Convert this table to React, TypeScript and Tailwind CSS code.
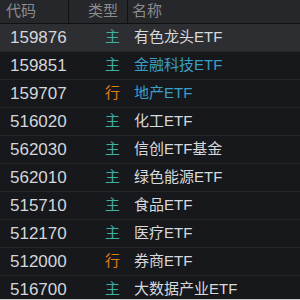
import React from 'react'

type Row = { code: string; kind: '主' | '行'; name: string; hot?: boolean }

const rows: Row[] = [
  { code: '159876', kind: '主', name: '有色龙头ETF' },
  { code: '159851', kind: '主', name: '金融科技ETF', hot: true },
  { code: '159707', kind: '行', name: '地产ETF', hot: true },
  { code: '516020', kind: '主', name: '化工ETF' },
  { code: '562030', kind: '主', name: '信创ETF基金' },
  { code: '562010', kind: '主', name: '绿色能源ETF' },
  { code: '515710', kind: '主', name: '食品ETF' },
  { code: '512170', kind: '主', name: '医疗ETF' },
  { code: '512000', kind: '行', name: '券商ETF' },
  { code: '516700', kind: '主', name: '大数据产业ETF' },
]

export default function App() {
  return (
    <div
      className="relative w-[300px] h-[300px] overflow-hidden bg-[#16181c] text-[15px]"
      style={{ fontFamily: '"Liberation Sans", "Noto Sans CJK SC", sans-serif' }}
    >
      {/* 表头 */}
      <div className="grid grid-cols-[69px_59px_1fr] h-[24px] bg-[#26272b] border-b border-[#101114] text-[#8a8b8f]">
        <div className="flex items-center pl-[6px] border-r border-[#101114]">代码</div>
        <div className="flex items-center justify-end pr-[9px] border-r border-[#101114]">类型</div>
        <div className="flex items-center pl-[4px]">名称</div>
      </div>

      {rows.map((r, i) => (
        <div
          key={r.code}
          className={
            'grid grid-cols-[69px_59px_1fr] h-[28px] border-b border-[#24262a] ' +
            (i === 0 ? 'bg-[#2d2e32] h-[27px]' : '')
          }
        >
          <div className="flex items-center pl-[10px] text-[17px] text-[#d4d6da]">{r.code}</div>
          <div
            className={
              'flex items-center justify-end pr-[8px] ' +
              (r.kind === '主' ? 'text-[#3fb0a4]' : 'text-[#e07e16]')
            }
          >
            {r.kind}
          </div>
          <div className={'flex items-center pl-[6px] ' + (r.hot ? 'text-[#3a9ec6]' : 'text-[#d8d9dc]')}>
            {r.name}
          </div>
        </div>
      ))}

      <div className="absolute left-0 right-0 bottom-0 h-[1px] bg-[#c9cacc]" />
    </div>
  )
}
